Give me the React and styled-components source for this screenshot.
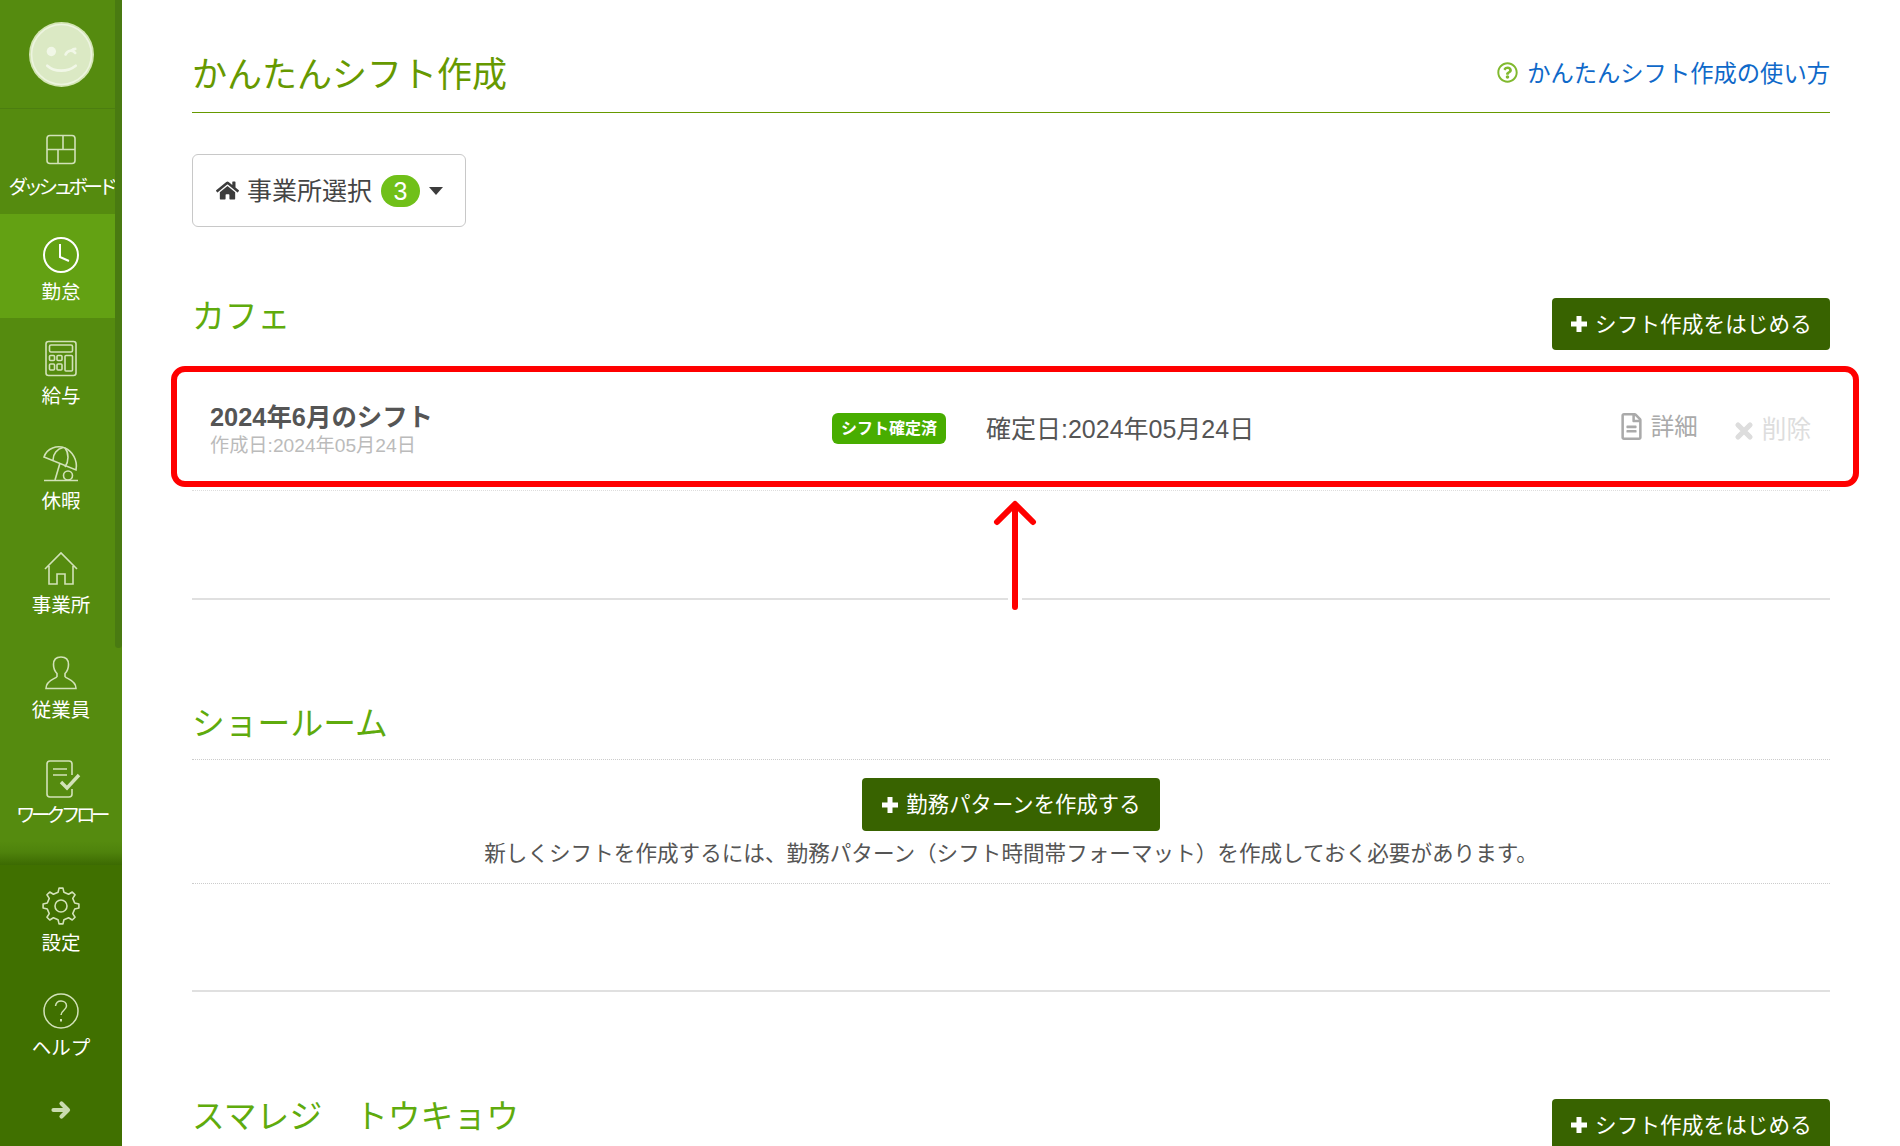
import React from "react";
import styled, { createGlobalStyle } from "styled-components";
import { FaHome, FaRegQuestionCircle, FaRegFileAlt } from "react-icons/fa";

const Global = createGlobalStyle`
  html, body { margin: 0; padding: 0; height: 100%; overflow: hidden; background: #fff; }
  body { font-family: "Liberation Sans", "Noto Sans CJK JP", sans-serif; color: #555; }
  * { box-sizing: border-box; }
`;

const Page = styled.div`
  position: relative;
  display: flex;
  width: 1900px;
  height: 1146px;
  overflow: hidden;
`;
const Sidebar = styled.aside`
  position: relative;
  flex: 0 0 122px;
  display: flex;
  flex-direction: column;
  background: #558b0f;
  height: 1146px;
`;
const ScrollThumb = styled.div`
  position: absolute;
  top: 0;
  right: 0;
  width: 7px;
  height: 648px;
  border-radius: 0 0 4px 4px;
  background: #497a11;
`;
const Logo = styled.div`
  height: 109px;
  width: 115px;
  flex: none;
  display: flex;
  align-items: flex-start;
  justify-content: center;
  padding: 22px 0 0 7px;
  border-bottom: 1px solid #4c7e10;
`;
const NavList = styled.nav`
  width: 115px;
  display: flex;
  flex-direction: column;
`;
const NavItem = styled.a`
  flex: 0 0 104.6px;
  height: 104.6px;
  display: flex;
  flex-direction: column;
  align-items: center;
  padding: 19px 0 0 ${(p) => (p.$wide ? 0 : 7)}px;
  background: ${(p) => (p.$active ? "#63a113" : "transparent")};
  color: ${(p) => (p.$active ? "#fff" : "#d2e2b8")};
`;
const IconBox = styled.div`
  width: 44px;
  height: 44px;
  display: flex;
  align-items: center;
  justify-content: center;
`;
const NavLabel = styled.span`
  height: 30px;
  line-height: 30px;
  font-size: 19.5px;
  color: #fff;
  white-space: nowrap;
  letter-spacing: ${(p) => (p.$tight ? "-4.5px" : "0")};
`;
const Fade = styled.div`
  flex: none;
  height: 24px;
  background: linear-gradient(#558b0f 0%, #4f830c 45%, #3c6a02 100%);
`;
const Bottom = styled.div`
  flex: 1;
  background: #407000;
  width: 122px;
  display: flex;
  flex-direction: column;
`;
const BottomItems = styled.div`
  width: 122px;
  display: flex;
  flex-direction: column;
`;
const Collapse = styled.div`
  height: 72px;
  display: flex;
  align-items: center;
  justify-content: center;
  color: #c9dbb0;
`;

const Main = styled.main`
  flex: 1;
  min-width: 0;
  padding: 0 70px;
`;
const Header = styled.header`
  height: 113px;
  padding-top: 31px;
  display: flex;
  align-items: center;
  justify-content: space-between;
  border-bottom: 1px solid #669900;
`;
const PageTitle = styled.h1`
  margin: 0;
  font-size: 35px;
  font-weight: 400;
  color: #669900;
`;
const HelpLink = styled.a`
  display: flex;
  align-items: center;
  gap: 9px;
  font-size: 23.3px;
  color: #0f69c9;
  svg { color: #80b92e; font-size: 21px; margin-top: 2px; }
`;
const SelectButton = styled.button`
  margin-top: 41px;
  display: flex;
  align-items: center;
  width: 274px;
  height: 73px;
  padding: 0 0 0 23px;
  background: #fff;
  border: 1px solid #c8c8c8;
  border-radius: 6px;
  font: inherit;
  font-size: 25px;
  color: #444;
  svg { font-size: 23px; margin-right: 8px; color: #3c3c3c; }
`;
const SelectText = styled.span`
  margin-top: -4px;
`;
const CountBadge = styled.span`
  margin-left: 9px;
  width: 39px;
  height: 32px;
  border-radius: 16px;
  background: #70c019;
  color: #fff;
  font-size: 25px;
  line-height: 32px;
  text-align: center;
`;
const Caret = styled.span`
  margin-left: 9px;
  border-style: solid;
  border-width: 8px 7.5px 0;
  border-color: #3c3c3c transparent transparent;
`;
const SectionHead = styled.div`
  margin-top: ${(p) => p.$top}px;
  height: ${(p) => p.$h}px;
  display: flex;
  justify-content: space-between;
  align-items: flex-start;
  border-bottom: ${(p) => (p.$line ? "1px dotted #ccc" : "none")};
`;
const SectionTitle = styled.h2`
  margin: ${(p) => p.$offset || 0}px 0 0;
  font-size: 32.8px;
  line-height: 36px;
  font-weight: 400;
  color: #5fab0d;
  white-space: pre;
`;
const DarkButton = styled.button`
  display: inline-flex;
  align-items: center;
  justify-content: center;
  gap: 7px;
  width: ${(p) => p.$w}px;
  height: ${(p) => p.$h || 52}px;
  border: 0;
  border-radius: 4px;
  background: #386300;
  color: #fff;
  font: inherit;
  font-size: ${(p) => p.$fs || 21.6}px;
  letter-spacing: 0.1px;
  white-space: nowrap;
`;
const ButtonText = styled.span`
  margin-top: -4px;
`;
const Row = styled.div`
  margin-top: 22px;
  height: 119px;
  display: flex;
  align-items: center;
  padding: 0 19px 0 18px;
  border-bottom: 1px dotted #ddd;
`;
const RowInfo = styled.div`
  width: 622px;
  display: flex;
  flex-direction: column;
`;
const RowTitle = styled.div`
  font-size: 25.4px;
  line-height: 26px;
  font-weight: 700;
  color: #555;
`;
const RowSub = styled.div`
  font-size: 19.2px;
  line-height: 24px;
  color: #bbb;
  margin-top: 4px;
`;
const StatusBadge = styled.span`
  flex: none;
  width: 114px;
  height: 31px;
  margin-top: -6px;
  border-radius: 6px;
  background: #48ad00;
  color: #fff;
  font-size: 16px;
  font-weight: 700;
  line-height: 31px;
  text-align: center;
  white-space: nowrap;
`;
const ConfirmDate = styled.div`
  flex: 1;
  margin: -8px 0 0 40px;
  font-size: 25px;
  color: #555;
`;
const Action = styled.a`
  display: flex;
  align-items: center;
  gap: ${(p) => p.$gap}px;
  margin: 0 0 0 ${(p) => p.$ml || 0}px;
  font-size: ${(p) => p.$fs}px;
  color: ${(p) => p.$color};
  svg { font-size: ${(p) => p.$icon}px; margin-top: ${(p) => p.$iconTop}px; }
`;
const ActionText = styled.span`
  margin-top: ${(p) => p.$mt}px;
`;
const Rule = styled.hr`
  margin: ${(p) => p.$top}px 0 0;
  border: 0;
  border-top: 2px solid #e0e0e0;
`;
const EmptyBlock = styled.div`
  height: 124px;
  padding-top: 18px;
  display: flex;
  flex-direction: column;
  align-items: center;
  border-bottom: 1px dotted #ccc;
`;
const EmptyText = styled.p`
  margin: 8px 0 0;
  font-size: 21.6px;
  line-height: 30px;
  color: #555;
  white-space: nowrap;
`;
const RedFrame = styled.div`
  position: absolute;
  left: 171px;
  top: 366px;
  width: 1688px;
  height: 121px;
  border: 6px solid #ff0000;
  border-radius: 14px;
`;
const RedArrow = styled.svg`
  position: absolute;
  left: 985px;
  top: 492px;
`;

const S = { fill: "none", stroke: "currentColor", strokeWidth: 1.6 };

const PlusIcon = () => (
  <svg width="18" height="18" viewBox="0 0 18 18" fill="none" stroke="currentColor" strokeWidth="5">
    <path d="M9 1V17M1 9H17" />
  </svg>
);
const CrossIcon = () => (
  <svg width="20" height="20" viewBox="0 0 20 20" fill="none" stroke="currentColor" strokeWidth="5.200" strokeLinecap="round">
    <path d="M4 4L16 16M16 4L4 16" />
  </svg>
);
const BoldArrow = () => (
  <svg width="20" height="20" viewBox="0 0 20 20" fill="none" stroke="currentColor" strokeWidth="4.200" strokeLinecap="round" strokeLinejoin="round">
    <path d="M2.500 10H16M10.500 3.500L17 10L10.500 16.500" />
  </svg>
);
const Smiley = () => (
  <svg width="65" height="65" viewBox="0 0 64 64">
    <circle cx="32" cy="32" r="32" fill="#d3e5b4" />
    <circle cx="32" cy="32" r="29.5" fill="#dbe9c4" stroke="#edf4e0" strokeWidth="1.6" />
    <circle cx="22" cy="29" r="4.6" fill="#f1f7e7" />
    <path d="M36 32c2-4.500 7-5 9.500-1.500M42 28c1-1 2-1.500 3.500-1.500" fill="none" stroke="#f1f7e7" strokeWidth="2.600" strokeLinecap="round" />
    <path d="M18 43c7 6.5 20 6.5 28 0" fill="none" stroke="#f1f7e7" strokeWidth="2.600" strokeLinecap="round" />
  </svg>
);
const DashIcon = () => (
  <svg width="44" height="44" viewBox="0 0 44 44" {...S}>
    <rect x="8" y="7.5" width="28" height="28" rx="3" />
    <path d="M8 21.5h28M24 7.5v14M19 21.5v14" />
  </svg>
);
const ClockIcon = () => (
  <svg width="44" height="44" viewBox="0 0 44 44" fill="none" stroke="currentColor" strokeWidth="2">
    <circle cx="22" cy="22" r="17" />
    <path d="M21 11v13l9 4" />
  </svg>
);
const CalcIcon = () => (
  <svg width="44" height="44" viewBox="0 0 44 44" {...S}>
    <rect x="7" y="4.5" width="30" height="34" rx="2.5" />
    <rect x="10.5" y="8" width="23" height="7" rx="1.5" />
    <rect x="10.5" y="18.5" width="5" height="5" rx="1" />
    <rect x="18" y="18.5" width="5" height="5" rx="1" />
    <rect x="10.5" y="27" width="5" height="6" rx="1" />
    <rect x="18" y="27" width="5" height="6" rx="1" />
    <rect x="26" y="18.5" width="7.5" height="15.5" rx="1" />
  </svg>
);
const UmbrellaIcon = () => (
  <svg width="44" height="44" viewBox="0 0 44 44" {...S}>
    <path d="M5 15L37 28C39 18 33 9 26 6C18 3 8 6 5 15Z" />
    <path d="M14 18C14 12 18 7 24 5.500M26 25C30 19 30 11 26 6" />
    <path d="M21 21L16 38" />
    <circle cx="29" cy="33.500" r="4.500" />
    <path d="M5 38.500H39" />
  </svg>
);
const HouseIcon = () => (
  <svg width="44" height="44" viewBox="0 0 44 44" {...S}>
    <path d="M6 23L22 7L38 23M10 20V38H18V28H26V38H34V20" strokeLinejoin="miter" />
  </svg>
);
const PersonIcon = () => (
  <svg width="44" height="44" viewBox="0 0 44 44" {...S}>
    <path d="M22 6c-5 0-7.500 3-7.500 7.500 0 4 1.500 7 3.500 9v3c-1 2.500-11 3-11 12h30c0-9-10-9.500-11-12v-3c2-2 3.500-5 3.500-9C29.500 9 27 6 22 6Z" />
  </svg>
);
const FlowIcon = () => (
  <svg width="44" height="44" viewBox="0 0 44 44" {...S}>
    <path d="M33 19V8c0-2-1-3-3-3H11C9 5 8 6 8 8v30c0 2 1 3 3 3h19c2 0 3-1 3-3v-5" />
    <path d="M14 13h14M14 19h14" />
    <path d="M22 26l6 6 12-13" strokeWidth="3.400" />
  </svg>
);
const gearPath = (() => {
  const teeth = 8;
  const pts = [];
  for (let i = 0; i < teeth; i++) {
    const a = (i * 2 * Math.PI) / teeth - Math.PI / 2;
    const step = (2 * Math.PI) / teeth;
    [[-0.27, 14], [-0.14, 18], [0.14, 18], [0.27, 14]].forEach(([o, r]) => {
      const t = a + o * step;
      pts.push(`${(22 + r * Math.cos(t)).toFixed(2)} ${(22 + r * Math.sin(t)).toFixed(2)}`);
    });
  }
  return `M${pts.join("L")}Z`;
})();
const GearIcon = () => (
  <svg width="44" height="44" viewBox="0 0 44 44" {...S}>
    <path d={gearPath} strokeLinejoin="round" />
    <circle cx="22" cy="22" r="6" />
  </svg>
);
const HelpIcon = () => (
  <svg width="44" height="44" viewBox="0 0 44 44" fill="none" stroke="currentColor" strokeWidth="1.500">
    <circle cx="22" cy="22" r="17" />
    <path d="M16.500 17c.5-3.500 3-5 5.500-5 3 0 5.500 2 5.500 5 0 4-5.500 4.500-5.500 9" />
    <path d="M22 30v2.500" strokeWidth="2" />
  </svg>
);

const items = [
  { label: "ダッシュボード", Icon: DashIcon, tight: true },
  { label: "勤怠", Icon: ClockIcon, active: true },
  { label: "給与", Icon: CalcIcon },
  { label: "休暇", Icon: UmbrellaIcon },
  { label: "事業所", Icon: HouseIcon },
  { label: "従業員", Icon: PersonIcon },
  { label: "ワークフロー", Icon: FlowIcon, tight: true },
];

const Item = ({ label, Icon, active, tight, wide }) => (
  <NavItem $active={active} $wide={wide}>
    <IconBox><Icon /></IconBox>
    <NavLabel $tight={tight}>{label}</NavLabel>
  </NavItem>
);

export default function App() {
  return (
    <Page>
      <Global />
      <Sidebar>
        <ScrollThumb />
        <Logo><Smiley /></Logo>
        <NavList>
          {items.map((it) => <Item key={it.label} {...it} />)}
        </NavList>
        <Fade />
        <Bottom>
          <BottomItems>
            <Item label="設定" Icon={GearIcon} wide />
            <Item label="ヘルプ" Icon={HelpIcon} wide />
          </BottomItems>
          <Collapse><BoldArrow /></Collapse>
        </Bottom>
      </Sidebar>
      <Main>
        <Header>
          <PageTitle>かんたんシフト作成</PageTitle>
          <HelpLink><FaRegQuestionCircle />かんたんシフト作成の使い方</HelpLink>
        </Header>
        <SelectButton>
          <FaHome /><SelectText>事業所選択</SelectText><CountBadge>3</CountBadge><Caret />
        </SelectButton>

        <SectionHead $top={71} $h={52}>
          <SectionTitle $offset={1}>カフェ</SectionTitle>
          <DarkButton $w={278}><PlusIcon /><ButtonText>シフト作成をはじめる</ButtonText></DarkButton>
        </SectionHead>
        <Row>
          <RowInfo>
            <RowTitle>2024年6月のシフト</RowTitle>
            <RowSub>作成日:2024年05月24日</RowSub>
          </RowInfo>
          <StatusBadge>シフト確定済</StatusBadge>
          <ConfirmDate>確定日:2024年05月24日</ConfirmDate>
          <Action $gap={6} $fs={23.5} $color="#aaa" $icon={27} $iconTop={-10}><FaRegFileAlt /><ActionText $mt={-13}>詳細</ActionText></Action>
          <Action $gap={8} $ml={36} $fs={24.6} $color="#ddd" $icon={20} $iconTop={-1}><CrossIcon /><ActionText $mt={-8}>削除</ActionText></Action>
        </Row>
        <Rule $top={107} />

        <SectionHead $top={104} $h={56} $line>
          <SectionTitle $offset={2}>ショールーム</SectionTitle>
        </SectionHead>
        <EmptyBlock>
          <DarkButton $w={298} $h={53} $fs={21.300}><PlusIcon /><ButtonText>勤務パターンを作成する</ButtonText></DarkButton>
          <EmptyText>新しくシフトを作成するには、勤務パターン（シフト時間帯フォーマット）を作成しておく必要があります。</EmptyText>
        </EmptyBlock>
        <Rule $top={106} />

        <SectionHead $top={107} $h={52}>
          <SectionTitle>スマレジ　トウキョウ</SectionTitle>
          <DarkButton $w={278}><PlusIcon /><ButtonText>シフト作成をはじめる</ButtonText></DarkButton>
        </SectionHead>
      </Main>

      <RedFrame />
      <RedArrow width="60" height="125" viewBox="0 0 60 125" fill="none" strokeLinecap="round" strokeLinejoin="round">
        <path d="M30 13V115M12 30L30 12L48 30" stroke="#fff" strokeWidth="14" />
        <path d="M30 13V115M12 30L30 12L48 30" stroke="#ff0000" strokeWidth="6" />
      </RedArrow>
    </Page>
  );
}
